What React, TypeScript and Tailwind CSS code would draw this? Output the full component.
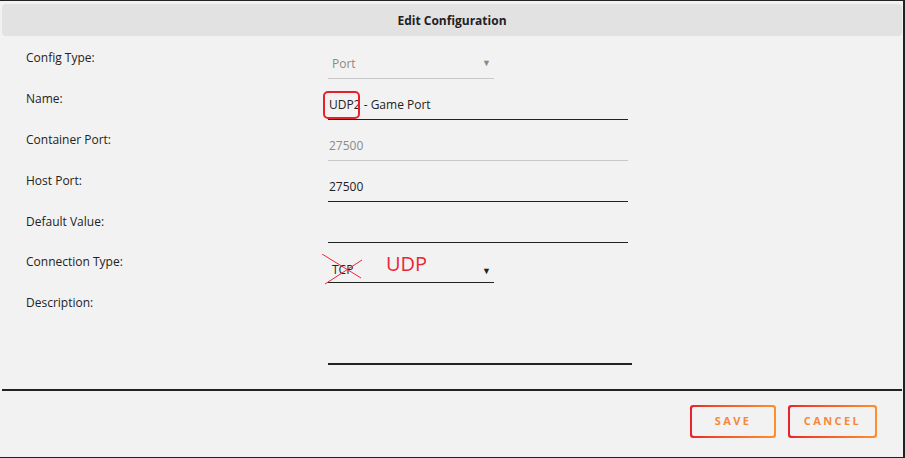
import React from "react";

const font = { fontFamily: '"Open Sans", "Noto Sans", sans-serif' };

function Label({ children, className = "" }: { children: React.ReactNode; className?: string }) {
  return (
    <div className={"w-[302px] shrink-0 text-[12px] leading-[16px] text-[#222] " + className}>{children}</div>
  );
}

function Button({ children }: { children: React.ReactNode }) {
  return (
    <div className="rounded-[3px] bg-gradient-to-r from-[#e8202a] to-[#ff8f2c] p-[2px]">
      <div className="flex h-[29px] items-center justify-center rounded-[2px] bg-[#f2f2f2] px-[24px]">
        <span className="text-[11px] font-bold tracking-[2.4px] text-[#f7883a]">{children}</span>
      </div>
    </div>
  );
}

export default function App() {
  return (
    <div style={font} className="h-[458px] w-[905px] overflow-hidden bg-white">
      <div className="flex h-[458px] w-[905px] flex-col border-t border-r-2 border-b border-[#222] bg-[#f2f2f2]">
        <div className="ml-[2px] mr-[1px] mt-[3px] flex h-[32px] items-center justify-center rounded-[4px] bg-[#e2e2e2]">
          <span className="mt-[1px] text-[12px] font-bold text-[#222]">Edit Configuration</span>
        </div>

        <div className="flex flex-col pl-[26px] pt-[10px]">
          {/* Config Type */}
          <div className="flex h-[41px]">
            <Label className="mt-[4px]">Config Type:</Label>
            <div className="relative flex h-[33px] w-[166px] items-start border-b border-[#c8c8c8] pl-[4px] pt-[10px]">
              <span className="text-[12px] leading-[16px] text-[#8a8a8a]">Port</span>
              <span className="absolute right-[3px] top-[12px] text-[9px] leading-[10px] text-[#8a8a8a]">▼</span>
            </div>
          </div>

          {/* Name */}
          <div className="flex h-[41px]">
            <Label className="mt-[4px]">Name:</Label>
            <div className="relative flex h-[33px] w-[300px] items-start border-b border-[#222] pl-[1px] pt-[10px]">
              <span className="text-[12px] leading-[16px] text-[#222]">UDP2 - Game Port</span>
              <div className="absolute left-[-5px] top-[4px] h-[28px] w-[37px] rounded-[5px] border-2 border-[#e8202a]" />
            </div>
          </div>

          {/* Container Port */}
          <div className="flex h-[41px]">
            <Label className="mt-[4px]">Container Port:</Label>
            <div className="flex h-[33px] w-[300px] items-start border-b border-[#c8c8c8] pl-[1px] pt-[10px]">
              <span className="text-[12px] leading-[16px] text-[#8a8a8a]">27500</span>
            </div>
          </div>

          {/* Host Port */}
          <div className="flex h-[41px]">
            <Label className="mt-[4px]">Host Port:</Label>
            <div className="flex h-[33px] w-[300px] items-start border-b border-[#222] pl-[1px] pt-[10px]">
              <span className="text-[12px] leading-[16px] text-[#222]">27500</span>
            </div>
          </div>

          {/* Default Value */}
          <div className="flex h-[40px]">
            <Label className="mt-[4px]">Default Value:</Label>
            <div className="h-[33px] w-[300px] border-b border-[#222]" />
          </div>

          {/* Connection Type */}
          <div className="flex h-[41px]">
            <Label className="mt-[4px]">Connection Type:</Label>
            <div className="relative flex h-[33px] w-[166px] items-start border-b border-[#222] pl-[4px] pt-[12px]">
              <span className="text-[12px] leading-[16px] text-[#222]">TCP</span>
              <span className="absolute left-[58px] top-[0px] text-[20px] leading-[28px] text-[#ee2535]">UDP</span>
              <span className="absolute right-[3px] top-[16px] text-[9px] leading-[10px] text-[#222]">▼</span>
              <svg className="absolute left-[-6px] top-[4px]" width="44" height="32" viewBox="0 0 44 32">
                <line x1="0" y1="0" x2="39" y2="24" stroke="#ee2535" strokeWidth="1" />
                <line x1="3" y1="30" x2="40" y2="6" stroke="#ee2535" strokeWidth="1" />
              </svg>
            </div>
          </div>

          {/* Description */}
          <div className="flex h-[74px]">
            <Label className="mt-[4px]">Description:</Label>
            <div className="h-[74px] w-[304px] border-b-2 border-[#222]" />
          </div>
        </div>

        <div className="ml-[2px] mr-[1px] mt-[24px] border-t-2 border-[#222]" />

        <div className="mr-[26px] mt-[14px] flex justify-end gap-[12px]">
          <div className="w-[86px]"><Button>SAVE</Button></div>
          <div className="w-[89px]"><Button>CANCEL</Button></div>
        </div>
      </div>
    </div>
  );
}
